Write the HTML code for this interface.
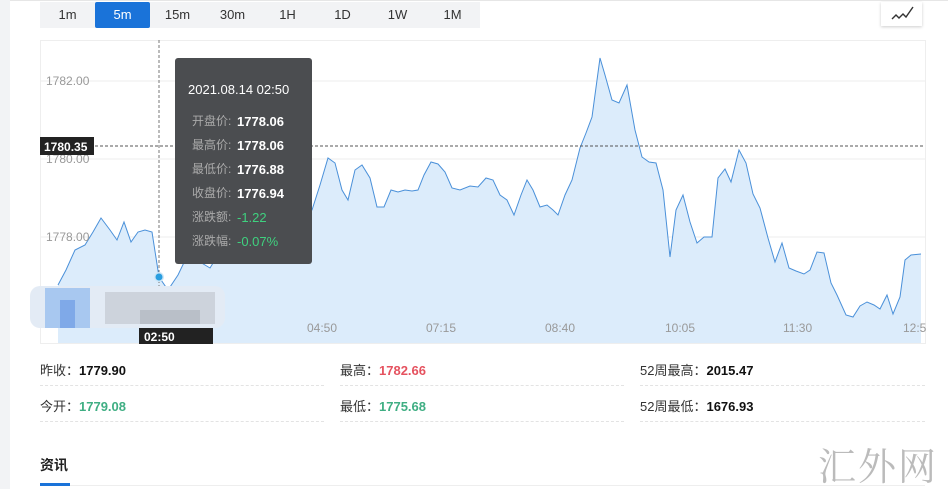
<!DOCTYPE html>
<html><head><meta charset="utf-8"><style>
body{margin:0;width:948px;height:489px;background:#fff;position:relative;overflow:hidden;font-family:"Liberation Sans","Noto Sans CJK SC",sans-serif;}
.lm{position:absolute;left:0;top:0;width:10px;height:489px;background:#f2f3f5}
.top{position:absolute;left:10px;top:0;width:938px;height:3px;border-top:1px solid #e6e6e6}
.tabs{position:absolute;left:40px;top:2px;width:440px;height:26px;background:#f2f3f5;font-size:13px;color:#333}
.tabs span{position:absolute;top:0;height:26px;line-height:26px;text-align:center;width:55px}
.tabs .a{background:#1a73d9;color:#fff;border-radius:2px}
.ib{position:absolute;left:881px;top:2px;width:41px;height:24px;background:#fff;box-shadow:0 1px 3px rgba(0,0,0,.2)}
.s{position:absolute;font-size:13px;color:#333}
.s b{font-weight:bold}
.dl{position:absolute;height:0;border-top:1px dashed #e3e3e3}
</style></head><body>
<div class="lm"></div><div class="top"></div>
<div class="tabs"><span style="left:0">1m</span><span class="a" style="left:55px">5m</span><span style="left:110px">15m</span><span style="left:165px">30m</span><span style="left:220px">1H</span><span style="left:275px">1D</span><span style="left:330px">1W</span><span style="left:385px">1M</span></div>
<div class="ib"><svg width="41" height="24"><polyline points="11,17 15,13 18,16 22,12 25,15 32,5" fill="none" stroke="#333" stroke-width="1.4"/></svg></div>
<svg style="position:absolute;left:0;top:0" width="948" height="345">
<rect x="40.5" y="40.5" width="885" height="303" fill="#fff" stroke="#eee"/>
<line x1="40" y1="81" x2="925" y2="81" stroke="#eee"/>
<line x1="40" y1="159" x2="925" y2="159" stroke="#eee"/>
<line x1="40" y1="237" x2="925" y2="237" stroke="#eee"/>
<polygon fill="#dcecfb" points="58,343 58,285 66,270 75,250 85,245 93,232 101,218 110,230 117,240 124,222 131,242 138,232 145,230 152,232 159,277 168,290 178,275 190,250 200,262 210,268 218,255 240,240 260,225 280,215 300,215 312,210 320,185 328,158 335,163 342,190 348,200 355,170 362,165 370,178 377,207 384,207 391,190 398,192 405,190 412,191 418,190 424,175 431,162 438,164 445,172 452,188 460,190 470,186 478,187 486,178 493,180 500,195 507,200 514,215 521,195 527,180 533,190 540,207 547,205 553,210 558,215 565,195 572,180 580,148 586,133 592,117 600,58 605,75 612,100 619,103 627,85 635,130 642,157 649,162 656,163 663,190 670,257 676,210 683,195 690,222 697,243 704,237 712,237 718,178 725,169 731,182 739,150 746,163 753,194 760,208 768,238 775,262 782,243 789,268 796,271 804,274 810,270 817,252 824,253 831,283 837,295 846,315 853,317 860,306 867,302 874,305 880,309 887,295 893,314 900,297 905,260 911,255 921,254 921,343"/>
<polyline fill="none" stroke="#4a90d9" stroke-width="1" points="58,285 66,270 75,250 85,245 93,232 101,218 110,230 117,240 124,222 131,242 138,232 145,230 152,232 159,277 168,290 178,275 190,250 200,262 210,268 218,255 240,240 260,225 280,215 300,215 312,210 320,185 328,158 335,163 342,190 348,200 355,170 362,165 370,178 377,207 384,207 391,190 398,192 405,190 412,191 418,190 424,175 431,162 438,164 445,172 452,188 460,190 470,186 478,187 486,178 493,180 500,195 507,200 514,215 521,195 527,180 533,190 540,207 547,205 553,210 558,215 565,195 572,180 580,148 586,133 592,117 600,58 605,75 612,100 619,103 627,85 635,130 642,157 649,162 656,163 663,190 670,257 676,210 683,195 690,222 697,243 704,237 712,237 718,178 725,169 731,182 739,150 746,163 753,194 760,208 768,238 775,262 782,243 789,268 796,271 804,274 810,270 817,252 824,253 831,283 837,295 846,315 853,317 860,306 867,302 874,305 880,309 887,295 893,314 900,297 905,260 911,255 921,254"/>
<g font-size="12" fill="#999" font-family="Liberation Sans">
<text x="46" y="85">1782.00</text><text x="46" y="163">1780.00</text><text x="46" y="241">1778.00</text>
<text x="307" y="332">04:50</text><text x="426" y="332">07:15</text><text x="545" y="332">08:40</text><text x="665" y="332">10:05</text><text x="783" y="332">11:30</text><text x="903" y="332">12:5</text>
</g>
<line x1="40" y1="146" x2="925" y2="146" stroke="#555" stroke-dasharray="3,2"/>
<line x1="159" y1="40" x2="159" y2="343" stroke="#777" stroke-dasharray="3,2"/>
<rect x="30" y="286" width="195" height="42" fill="#e3ebf5" rx="10"/>
<rect x="45" y="288" width="45" height="40" fill="#a8c8f0"/><rect x="60" y="300" width="15" height="28" fill="#7fa9e8"/>
<rect x="105" y="292" width="110" height="32" fill="#cdd3dc"/><rect x="140" y="310" width="60" height="14" fill="#b9bfc8"/>
<circle cx="159" cy="277" r="5" fill="#cde6f7"/><circle cx="159" cy="277" r="3.5" fill="#2a9ee0"/>
<rect x="40" y="137" width="54" height="18" fill="#222"/>
<text x="44" y="151" font-size="12" fill="#fff" font-weight="bold">1780.35</text>
<rect x="139" y="328" width="74" height="16" fill="#222"/>
<text x="144" y="341" font-size="12" fill="#fff" font-weight="bold">02:50</text>
<rect x="175" y="58" width="137" height="206" rx="3" fill="#4b4d50"/>
<text x="188" y="94" font-size="13" fill="#fff">2021.08.14 02:50</text>
<g font-size="12" fill="#aaa" font-family="Liberation Sans,Noto Sans CJK SC">
<text x="192" y="125">开盘价:</text><text x="192" y="149">最高价:</text><text x="192" y="173">最低价:</text><text x="192" y="197">收盘价:</text><text x="192" y="221">涨跌额:</text><text x="192" y="245">涨跌幅:</text></g>
<g font-size="13" font-weight="bold" fill="#fff">
<text x="237" y="126">1778.06</text><text x="237" y="150">1778.06</text><text x="237" y="174">1776.88</text><text x="237" y="198">1776.94</text></g>
<text x="237" y="222" font-size="13" fill="#3fd17f">-1.22</text><text x="237" y="246" font-size="13" fill="#3fd17f">-0.07%</text>
</svg>
<div class="s" style="left:40px;top:360px">昨收：<b style="color:#111">1779.90</b></div>
<div class="s" style="left:340px;top:360px">最高：<b style="color:#e5525f">1782.66</b></div>
<div class="s" style="left:640px;top:360px">52周最高：<b style="color:#111">2015.47</b></div>
<div class="s" style="left:40px;top:396px">今开：<b style="color:#3fae83">1779.08</b></div>
<div class="s" style="left:340px;top:396px">最低：<b style="color:#3fae83">1775.68</b></div>
<div class="s" style="left:640px;top:396px">52周最低：<b style="color:#111">1676.93</b></div>
<div class="dl" style="left:40px;top:385px;width:284px"></div><div class="dl" style="left:340px;top:385px;width:284px"></div><div class="dl" style="left:640px;top:385px;width:285px"></div>
<div class="dl" style="left:40px;top:421px;width:284px"></div><div class="dl" style="left:340px;top:421px;width:284px"></div><div class="dl" style="left:640px;top:421px;width:285px"></div>
<div class="s" style="left:40px;top:455px;font-size:14px;font-weight:bold;color:#222">资讯</div>
<div style="position:absolute;left:40px;top:485px;width:885px;height:1px;background:#eee"></div>
<div style="position:absolute;left:40px;top:483px;width:30px;height:3px;background:#1a73d9"></div>
<div style="position:absolute;left:818px;top:436px;font-family:'Noto Serif CJK SC',serif;font-size:38px;color:#bbb;letter-spacing:2px">汇外网</div>
</body></html>
